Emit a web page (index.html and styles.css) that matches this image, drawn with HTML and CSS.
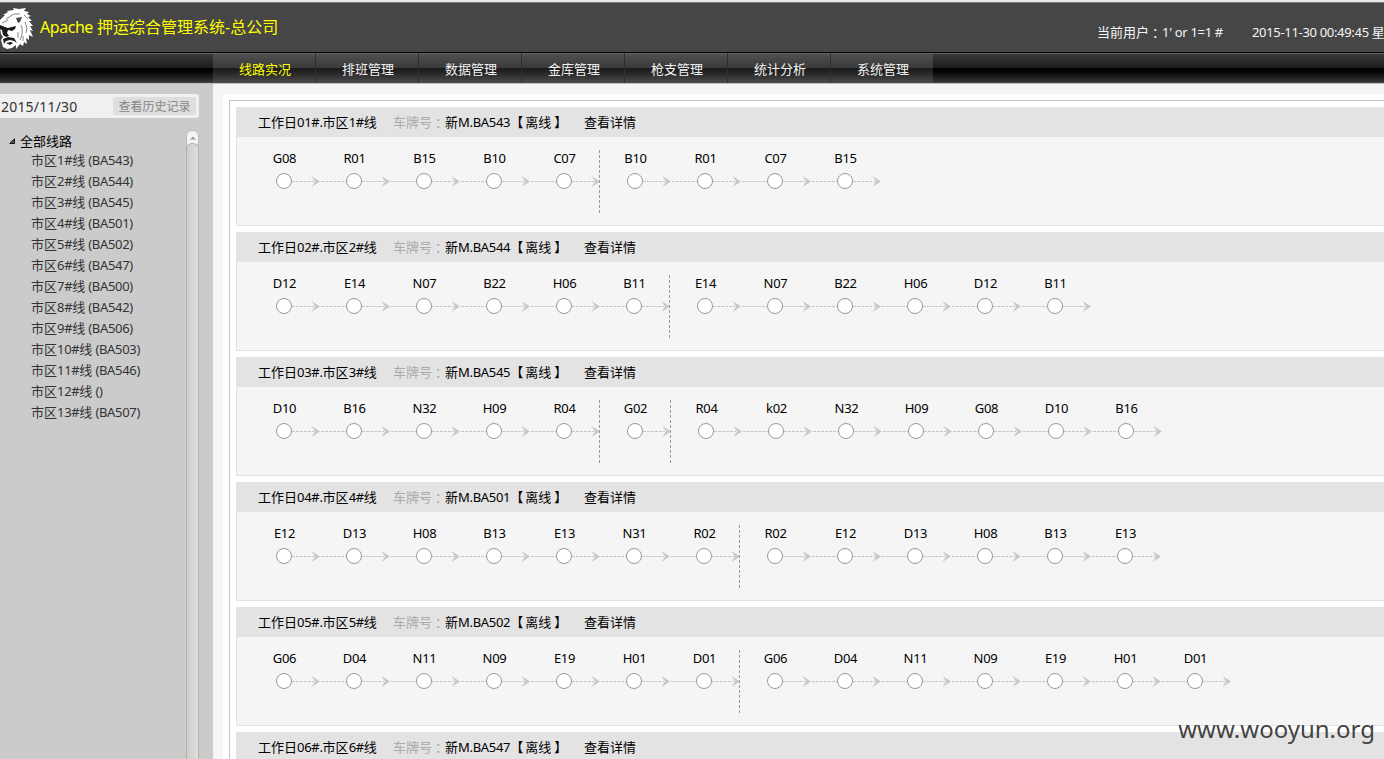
FILE: index.html
```html
<!DOCTYPE html>
<html lang="zh-CN">
<head>
<meta charset="utf-8">
<title>Apache 押运综合管理系统</title>
<link rel="stylesheet" href="styles.css">
</head>
<body>
<header class="header">
  <div class="brand">
    <svg class="logo" viewBox="0 0 34 44" width="34" height="44">
      <path fill="#fff" d="M0 13 5 8 3 8 8 5 7 4 14 3 13 1 19 2 26 1 24 4 29 5 27 7 31 9 28 10 32 14 29 14 33 19 30 19 33 24 30 23 33 30 29 28 29 33 26 31 27 37 24 35 23 39 20 37 16 42 16 38 12 41 7 42 3 40 1 33 3 30 1 27 0 20z"/>
      <path fill="#1c1c1c" d="m0 18 5 2 3 1 8-2-1 3-3 2-4-1-1 3 2 3-3 1-3-2-1-5-2-1zM3 32l5-2 6 1 3 5-3-2-4-1-4 1-2 3zM6 36l5-1 2 1-3 2z"/>
      <path fill="#444" d="m16 11 6-1-2 5-2 1z"/>
      <path fill="none" stroke="#666" stroke-width=".8" d="M21 18q3 7-1 15M25 15l2 6-1 5M6 12l8-5 6 0M2 16l6-3M24 8l4 4M23 29l0 5M18 25l0 6"/>
    </svg>
    <h1 class="brand-name"><span class="brand-latin">Apache</span> 押运综合管理系统-总公司</h1>
  </div>
  <div class="status">
    <span class="user">当前用户<span class="colon">：</span><span class="lt">1' or 1=1 #</span></span>
    <span class="clock"><span class="lt">2015-11-30 00:49:45 </span>星期一</span>
  </div>
</header>
<nav class="nav">
  <a class="nav-item active">线路实况</a><a class="nav-item">排班管理</a><a class="nav-item">数据管理</a><a class="nav-item">金库管理</a><a class="nav-item">枪支管理</a><a class="nav-item">统计分析</a><a class="nav-item">系统管理</a>
</nav>
<div class="body">
  <aside class="sidebar">
    <div class="datebar"><span class="date">2015/11/30</span><span class="history">查看历史记录</span></div>
    <div class="tree-wrap">
      <div class="tree">
        <div class="tree-root"><svg width="7" height="7" viewBox="0 0 7 7"><path d="M5.5.8v4.7H.8z" fill="#555" stroke="#111"/></svg>全部线路</div>
        <ul class="tree-list" id="tree"></ul>
      </div>
      <div class="scroll"><div class="scroll-up"><svg width="6" height="4" viewBox="0 0 6 4"><path d="M0 3.5 3 .5l3 3z" fill="#999"/></svg></div><div class="scroll-thumb"></div></div>
    </div>
  </aside>
  <main class="main"><div class="sheet"><div class="frame" id="routes"></div></div></main>
</div>
<div class="watermark">www.wooyun.org</div>
<script src="app.js"></script>
</body>
</html>
```
FILE: styles.css
```css
* { box-sizing: border-box; }
body { margin: 0; width: 1384px; height: 759px; overflow: hidden; position: relative; display: flex; flex-direction: column; background: #f5f5f5; color: #000; font: 13px/20px "Noto Sans", "Noto Sans CJK SC", sans-serif; white-space: nowrap; }
.lt { letter-spacing: -0.32px; white-space: pre; }
.header { flex: none; height: 52px; display: flex; justify-content: space-between; background: #464646; border-top: 2px solid #e8ebe8; box-shadow: inset 0 1px #777; overflow: hidden; }
.brand { display: flex; align-items: flex-start; }
.logo { flex: none; margin: 5px 0 0 0; }
.brand-name { margin: 13px 0 0 6px; font-size: 16px; line-height: 24px; font-weight: 400; color: #ff0; }
.brand-latin { letter-spacing: -0.45px; }
.status { display: flex; width: 287px; padding-top: 20px; color: #f5f5f5; }
.user { width: 155px; flex: none; }
.clock { flex: none; }
.nav { flex: none; height: 32px; display: flex; padding-left: 213px; border-top: 1px solid #000; border-bottom: 1px solid #bbb; background: linear-gradient(#666 0 1px, #3a3a3a 1px, #1c1c1c 15px, #000 15px, #020202 18px, #333 29px, #555 30px); }
.nav-item { width: 103px; padding: 6px 0 0 2px; text-align: center; color: #f2f2f2; border-right: 1px solid #303030; background: linear-gradient(#666 0 1px, #505050 1px, #393939 15px, #1b1b1b 15px, #202020 18px, #484848 29px, #555 30px); }
.nav-item:last-child { width: 102px; border-right: 0; }
.nav-item.active { color: #ff0; }
.body { flex: 1; min-height: 0; display: flex; }
.sidebar { flex: none; width: 213px; padding-top: 10px; background: #cbcbcb; display: flex; flex-direction: column; }
.datebar { flex: none; width: 199px; height: 24px; display: flex; align-items: center; justify-content: space-between; padding: 0 3px 0 1px; border-radius: 0 3px 3px 0; background: #f0f0f0; }
.date { padding-top: 1px; font-size: 14px; color: #333; letter-spacing: 0.2px; }
.history { width: 83px; height: 18px; line-height: 19px; font-size: 12px; text-align: center; color: #888; background: #dedede; border-radius: 2px; }
.tree-wrap { flex: 1; min-height: 0; display: flex; padding-top: 12px; }
.tree { width: 186px; padding-top: 1px; }
.tree-root { display: flex; align-items: center; gap: 4px; height: 20px; padding-left: 9px; }
.tree-list { list-style: none; margin: -1px 0 0; padding: 0 0 0 31px; color: #333; line-height: 21px; }
.scroll { width: 13px; display: flex; flex-direction: column; background: #cfcdca; }
.scroll-up { flex: none; height: 18px; display: flex; justify-content: center; padding-top: 5px; border: 1px solid #bbb; border-radius: 6px 6px 0 0; background: #f4f4f4; }
.scroll-thumb { flex: 1; margin-top: -5px; border: 1px solid #b4b2ae; border-bottom: 0; border-radius: 6px 6px 0 0; background: linear-gradient(90deg, #d0ceca, #dfdeda); }
.main { flex: 1; min-width: 0; padding: 10px 0 0 10px; background: #f5f5f5; }
.sheet { height: 100%; padding: 6px 0 0 6px; background: #fff; overflow: hidden; }
.frame { border: 1px solid #c5c5c5; border-right: 0; padding: 6px 0 0 6px; display: flex; flex-direction: column; gap: 6px; }
.route { height: 119px; flex: none; border: 1px solid #e3e3e3; border-width: 0 0 1px 1px; background: #f5f5f5; }
.route-head { height: 30px; display: flex; align-items: center; padding-left: 21px; background: #e3e3e3; }
.route-name { width: 135px; flex: none; letter-spacing: 0.03px; }
.plate-label { width: 52px; flex: none; color: #aaa; }
.colon { display: inline-block; width: 13px; text-indent: 3px; overflow: hidden; vertical-align: top; }
.plate { width: 139px; flex: none; }
.state { margin: 0 3px 0 2px; }
.groups { display: flex; padding: 13px 0 0 12px; }
.group { display: flex; height: 63px; }
.group + .group { padding-left: 1px; background: repeating-linear-gradient(#999 0 3px, transparent 3px 5px) 0 0 / 1px 100% no-repeat; }
.node { width: 70px; height: 42px; text-align: center; line-height: 18px; }
.node-name { display: block; height: 18px; margin-top: -1px; padding-left: 1px; }
.node svg { display: block; overflow: visible; margin-top: 5px; }
.watermark { position: absolute; right: 9px; top: 711px; font-size: 24px; line-height: 36px; color: #444; clip-path: inset(14px 0 0 0); }
```
FILE: app.js
```js
const routes = [
  ['BA543', 'G08 R01 B15 B10 C07', 'B10 R01 C07 B15'],
  ['BA544', 'D12 E14 N07 B22 H06 B11', 'E14 N07 B22 H06 D12 B11'],
  ['BA545', 'D10 B16 N32 H09 R04', 'G02', 'R04 k02 N32 H09 G08 D10 B16'],
  ['BA501', 'E12 D13 H08 B13 E13 N31 R02', 'R02 E12 D13 H08 B13 E13'],
  ['BA502', 'G06 D04 N11 N09 E19 H01 D01', 'G06 D04 N11 N09 E19 H01 D01'],
  ['BA547', '']
];
const plates = ['BA543', 'BA544', 'BA545', 'BA501', 'BA502', 'BA547', 'BA500', 'BA542', 'BA506', 'BA503', 'BA546', '', 'BA507'];

const lt = s => `<span class="lt">${s}</span>`;

const node = (name, first) => `<div class="node"><span class="node-name">${lt(name)}</span><svg width="70" height="18" viewBox="0 0 70 18">
  ${first ? '' : '<path d="M2 9.5H27" stroke="#c8c8c8" stroke-dasharray="3 1"/>'}
  <path d="M43 9.5H65" stroke="#c8c8c8" stroke-dasharray="3 1"/>
  <path d="M62.5 4 71 9.5 62.5 15 66 9.5z" fill="#c8c8c8"/>
  <circle cx="35" cy="9" r="7.5" fill="#fff" stroke="#999"/></svg></div>`;

document.getElementById('tree').innerHTML =
  plates.map((p, i) => `<li>市区${lt(i + 1 + '#')}线${lt(' (' + p + ')')}</li>`).join('');

document.getElementById('routes').innerHTML = routes.map(([plate, ...groups], i) => `<section class="route">
  <div class="route-head">
    <span class="route-name">工作日${lt('0' + (i + 1) + '#.')}市区${lt(i + 1 + '#')}线</span>
    <span class="plate-label">车牌号<span class="colon">：</span></span>
    <span class="plate">新${lt('M.' + plate)}【<span class="state">离线</span>】</span>
    <span>查看详情</span>
  </div>
  <div class="groups">${groups.filter(Boolean).map(g =>
    `<div class="group">${g.split(' ').map((n, k) => node(n, k === 0)).join('')}</div>`).join('')}</div>
</section>`).join('');
```
